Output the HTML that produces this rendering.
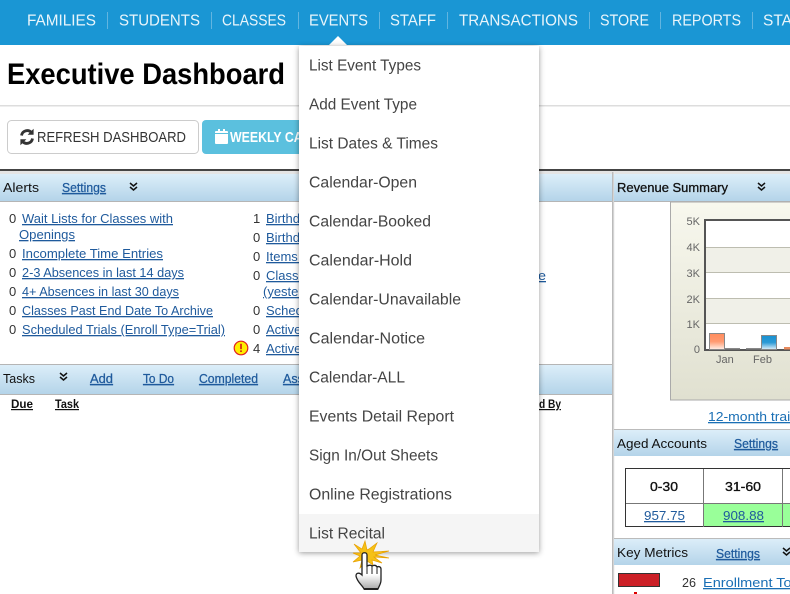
<!DOCTYPE html>
<html><head><meta charset="utf-8"><title>Executive Dashboard</title>
<style>
html,body{margin:0;padding:0;background:#fff;width:790px;height:594px;overflow:hidden}
svg{display:block;font-family:"Liberation Sans",sans-serif}
.n{font-size:16px;fill:#e9f5fb}
.m{font-size:15.5px;fill:#444}
.l{font-size:13px;fill:#1f5a9c;text-decoration:underline}
.c{font-size:13px;fill:#333}
.h{font-size:13px;fill:#111}
.s{font-size:12.5px;fill:#1f5a9c;text-decoration:underline;stroke:#1f5a9c;stroke-width:.25}
.b{font-size:12px;fill:#111;font-weight:bold;text-decoration:underline}
.y{font-size:11px;fill:#666}
</style></head><body>
<svg width="790" height="594" viewBox="0 0 790 594" xmlns="http://www.w3.org/2000/svg">
<defs>
<linearGradient id="hd" x1="0" y1="0" x2="0" y2="1"><stop offset="0" stop-color="#dceef9"/><stop offset="1" stop-color="#b4d4e9"/></linearGradient>
<linearGradient id="ch" x1="0" y1="0" x2="0" y2="1"><stop offset="0" stop-color="#f8f8ee"/><stop offset="1" stop-color="#e0e0d0"/></linearGradient>
<linearGradient id="or" x1="0" y1="0" x2="0" y2="1"><stop offset="0" stop-color="#ff8c5e"/><stop offset=".5" stop-color="#ff9a70"/><stop offset="1" stop-color="#fff0e8"/></linearGradient>
<linearGradient id="bl" x1="0" y1="0" x2="0" y2="1"><stop offset="0" stop-color="#1890d0"/><stop offset=".5" stop-color="#2a9ad6"/><stop offset="1" stop-color="#e0f0fa"/></linearGradient>
<linearGradient id="hand" x1="0" y1="0" x2="0" y2="1"><stop offset="0" stop-color="#fff"/><stop offset=".6" stop-color="#fff"/><stop offset="1" stop-color="#aaa"/></linearGradient>
</defs>

<!-- nav -->
<rect x="0" y="0" width="790" height="45" fill="#1a96d4"/>
<g class="n">
<text class="n" x="27" y="25.500" textLength="69" lengthAdjust="spacingAndGlyphs">FAMILIES</text>
<text class="n" x="119" y="25.500" textLength="81" lengthAdjust="spacingAndGlyphs">STUDENTS</text>
<text class="n" x="222" y="25.500" textLength="64" lengthAdjust="spacingAndGlyphs">CLASSES</text>
<text class="n" x="309" y="25.500" textLength="59" lengthAdjust="spacingAndGlyphs">EVENTS</text>
<text class="n" x="390" y="25.500" textLength="46" lengthAdjust="spacingAndGlyphs">STAFF</text>
<text class="n" x="459" y="25.500" textLength="119" lengthAdjust="spacingAndGlyphs">TRANSACTIONS</text>
<text class="n" x="600" y="25.500" textLength="49" lengthAdjust="spacingAndGlyphs">STORE</text>
<text class="n" x="672" y="25.500" textLength="69" lengthAdjust="spacingAndGlyphs">REPORTS</text>
<text class="n" x="763" y="25.500" textLength="29" lengthAdjust="spacingAndGlyphs">STA</text>
</g>
<g fill="#62b5e0">
<rect x="107" y="12" width="1" height="17"/><rect x="211" y="12" width="1" height="17"/><rect x="298" y="12" width="1" height="17"/><rect x="379" y="12" width="1" height="17"/><rect x="447" y="12" width="1" height="17"/><rect x="589" y="12" width="1" height="17"/><rect x="660" y="12" width="1" height="17"/><rect x="752" y="12" width="1" height="17"/>
</g>

<!-- title -->
<text x="7" y="84" font-size="30" font-weight="bold" fill="#000" textLength="278" lengthAdjust="spacingAndGlyphs">Executive Dashboard</text>
<rect x="0" y="105" width="790" height="1.500" fill="#ddd"/>

<!-- buttons -->
<rect x="7.500" y="120.500" width="191" height="33" rx="4" fill="#fff" stroke="#ccc"/>
<g fill="none" stroke="#333" stroke-width="2.800">
<path d="M21.500 135.500a5.800 5.800 0 0 1 10-3"/>
<path d="M32.500 138.500a5.800 5.800 0 0 1-10 3"/>
</g>
<path d="M33.600 128.800v6h-6zM20.400 145.200v-6h6z" fill="#333"/>
<text x="37" y="142" font-size="14.500" fill="#333" textLength="149" lengthAdjust="spacingAndGlyphs">REFRESH DASHBOARD</text>
<rect x="202" y="120" width="110" height="34" rx="4" fill="#5bc0de"/>
<path d="M215 134h13v9a1 1 0 0 1-1 1h-11a1 1 0 0 1-1-1zM216 131h2v-2h2v2h3v-2h2v2h2a1 1 0 0 1 1 1v1h-13v-1a1 1 0 0 1 1-1z" fill="#fff"/>
<text x="230" y="142" font-size="14.500" font-weight="bold" fill="#fff" textLength="124" lengthAdjust="spacingAndGlyphs">WEEKLY CALENDAR</text>

<!-- section lines -->
<rect x="0" y="169" width="790" height="2" fill="#444"/>
<rect x="0" y="171" width="790" height="3" fill="#e4e4e4"/>

<!-- alerts -->
<rect x="0" y="174" width="612" height="27" fill="url(#hd)"/>
<rect x="0" y="201" width="612" height="1" fill="#b5b5b5"/>
<text class="h" x="3" y="192" textLength="36" lengthAdjust="spacingAndGlyphs">Alerts</text>
<text class="s" x="62" y="192" textLength="44" lengthAdjust="spacingAndGlyphs">Settings</text>
<path d="M130 183l3.500 3 3.500-3M130 187l3.500 3 3.500-3" fill="none" stroke="#111" stroke-width="1.500"/>

<g class="c">
<text class="c" x="9" y="223">0</text><text class="c" x="9" y="258">0</text><text class="c" x="9" y="277">0</text><text class="c" x="9" y="296">0</text><text class="c" x="9" y="315">0</text><text class="c" x="9" y="334">0</text>
<text class="c" x="253" y="223">1</text><text class="c" x="253" y="242">0</text><text class="c" x="253" y="261">0</text><text class="c" x="253" y="280">0</text><text class="c" x="253" y="315">0</text><text class="c" x="253" y="334">0</text><text class="c" x="253" y="353">4</text>
</g>
<text class="l" x="22" y="223" textLength="151" lengthAdjust="spacingAndGlyphs">Wait Lists for Classes with</text>
<text class="l" x="19" y="239" textLength="56" lengthAdjust="spacingAndGlyphs">Openings</text>
<text class="l" x="22" y="258" textLength="141" lengthAdjust="spacingAndGlyphs">Incomplete Time Entries</text>
<text class="l" x="22" y="277" textLength="162" lengthAdjust="spacingAndGlyphs">2-3 Absences in last 14 days</text>
<text class="l" x="22" y="296" textLength="157" lengthAdjust="spacingAndGlyphs">4+ Absences in last 30 days</text>
<text class="l" x="22" y="315" textLength="191" lengthAdjust="spacingAndGlyphs">Classes Past End Date To Archive</text>
<text class="l" x="22" y="334" textLength="203" lengthAdjust="spacingAndGlyphs">Scheduled Trials (Enroll Type=Trial)</text>
<text class="l" x="266" y="223">Birthdays</text>
<text class="l" x="266" y="242">Birthdays</text>
<text class="l" x="266" y="261">Items Low</text>
<text class="l" x="266" y="280">Classes</text>
<text class="l" x="263" y="296">(yesterday)</text>
<text class="l" x="266" y="315">Scheduled</text>
<text class="l" x="266" y="334">Active</text>
<text class="l" x="266" y="353">Active</text>
<text class="l" x="538" y="280" textLength="8" lengthAdjust="spacingAndGlyphs">e</text>
<circle cx="241" cy="348" r="6.800" fill="#ffee00" stroke="#e02020" stroke-width="1.200"/>
<rect x="240.200" y="343.800" width="1.600" height="5.400" fill="#d01818"/><rect x="240.200" y="350.400" width="1.600" height="1.600" fill="#d01818"/>

<!-- tasks -->
<rect x="0" y="364" width="612" height="1" fill="#b5b5b5"/>
<rect x="0" y="365" width="612" height="29" fill="url(#hd)"/>
<rect x="0" y="394" width="612" height="1" fill="#b5b5b5"/>
<text class="h" x="3" y="383" textLength="32" lengthAdjust="spacingAndGlyphs">Tasks</text>
<path d="M60 373l3.500 3 3.500-3M60 377l3.500 3 3.500-3" fill="none" stroke="#111" stroke-width="1.500"/>
<text class="s" x="90" y="383" textLength="23" lengthAdjust="spacingAndGlyphs">Add</text>
<text class="s" x="143" y="383" textLength="31" lengthAdjust="spacingAndGlyphs">To Do</text>
<text class="s" x="199" y="383" textLength="59" lengthAdjust="spacingAndGlyphs">Completed</text>
<text class="s" x="283" y="383">Assign</text>
<text class="b" x="11" y="408" textLength="22" lengthAdjust="spacingAndGlyphs">Due</text>
<text class="b" x="55" y="408" textLength="24" lengthAdjust="spacingAndGlyphs">Task</text>
<text class="b" x="539" y="408" textLength="22" lengthAdjust="spacingAndGlyphs">d By</text>

<!-- divider -->
<rect x="612" y="172" width="1.500" height="422" fill="#bbb"/>
<rect x="613.500" y="172" width="1" height="422" fill="#eee"/>

<!-- revenue -->
<rect x="614" y="174" width="176" height="27" fill="url(#hd)"/>
<rect x="614" y="201" width="176" height="1" fill="#b5b5b5"/>
<text class="h" x="617" y="192" stroke="#111" stroke-width=".3" textLength="111" lengthAdjust="spacingAndGlyphs">Revenue Summary</text>
<path d="M758 183l3.500 3 3.500-3M758 187l3.500 3 3.500-3" fill="none" stroke="#111" stroke-width="1.500"/>
<rect x="670.500" y="202" width="130" height="198" fill="url(#ch)" stroke="#aaa"/>
<rect x="705" y="220" width="90" height="130" fill="#fff"/>
<rect x="705" y="247" width="90" height="25" fill="#f0f0e8"/>
<rect x="705" y="298" width="90" height="25" fill="#f0f0e8"/>
<g fill="#bdbdb0"><rect x="705" y="247" width="90" height="1"/><rect x="705" y="272" width="90" height="1"/><rect x="705" y="298" width="90" height="1"/><rect x="705" y="323" width="90" height="1"/></g>
<rect x="705" y="219" width="85" height="2" fill="#555"/>
<rect x="704" y="219" width="2" height="132" fill="#555"/>
<rect x="704" y="349" width="86" height="2" fill="#555"/>
<g class="y" text-anchor="end">
<text class="y" x="700" y="225">5K</text><text class="y" x="700" y="251">4K</text><text class="y" x="700" y="277">3K</text><text class="y" x="700" y="303">2K</text><text class="y" x="700" y="328">1K</text><text class="y" x="700" y="353">0</text>
</g>
<rect x="709.500" y="333.500" width="15" height="16" fill="url(#or)" stroke="#888"/>
<rect x="761.500" y="335.500" width="15" height="14" fill="url(#bl)" stroke="#888"/>
<rect x="725" y="348" width="15" height="1.500" fill="#888"/>
<rect x="746" y="348" width="15" height="1.500" fill="#888"/>
<rect x="784" y="347" width="6" height="2.500" fill="#e8895c"/>
<text class="y" x="716" y="363">Jan</text>
<text class="y" x="753" y="363">Feb</text>
<text x="708" y="421" font-size="13" fill="#1a6fb5" text-decoration="underline" textLength="104" lengthAdjust="spacingAndGlyphs">12-month trailing</text>
<rect x="614" y="429" width="176" height="1" fill="#bbb"/>

<!-- aged -->
<rect x="614" y="430" width="176" height="26" fill="url(#hd)"/>
<text class="h" x="617" y="448" textLength="90" lengthAdjust="spacingAndGlyphs">Aged Accounts</text>
<text class="s" x="734" y="448" textLength="44" lengthAdjust="spacingAndGlyphs">Settings</text>
<rect x="704" y="504" width="78" height="22" fill="#99ff99"/>
<rect x="783" y="504" width="7" height="22" fill="#99ff99"/>
<rect x="625.500" y="468.500" width="170" height="58" fill="none" stroke="#333"/>
<rect x="703" y="469" width="1" height="58" fill="#777"/><rect x="782" y="469" width="1" height="58" fill="#777"/>
<rect x="626" y="503" width="164" height="1" fill="#777"/>
<text x="664" y="491" font-size="13" fill="#111" stroke="#111" stroke-width=".35" text-anchor="middle" textLength="28" lengthAdjust="spacingAndGlyphs">0-30</text>
<text x="743" y="491" font-size="13" fill="#111" stroke="#111" stroke-width=".35" text-anchor="middle" textLength="36" lengthAdjust="spacingAndGlyphs">31-60</text>
<text class="l" x="644" y="520" textLength="41" lengthAdjust="spacingAndGlyphs">957.75</text>
<text class="l" x="723" y="520" textLength="41" lengthAdjust="spacingAndGlyphs">908.88</text>
<rect x="614" y="538" width="176" height="1" fill="#bbb"/>

<!-- key metrics -->
<rect x="614" y="539" width="176" height="26" fill="url(#hd)"/>
<text class="h" x="617" y="557" textLength="71" lengthAdjust="spacingAndGlyphs">Key Metrics</text>
<text class="s" x="716" y="558" textLength="44" lengthAdjust="spacingAndGlyphs">Settings</text>
<path d="M783 548l3.500 3 3.500-3M783 552l3.500 3 3.500-3" fill="none" stroke="#111" stroke-width="1.500"/>
<rect x="618.500" y="573.500" width="41" height="13" fill="#cc2027" stroke="#333"/>
<rect x="634" y="592" width="3" height="2" fill="#d00"/>
<text class="c" x="682" y="587" textLength="14" lengthAdjust="spacingAndGlyphs">26</text>
<text x="703" y="587" font-size="13" fill="#1a6fb5" text-decoration="underline" textLength="104" lengthAdjust="spacingAndGlyphs">Enrollment Total</text>

<!-- dropdown -->
<path d="M329 45l9-9 9 9z" fill="#fff"/>
<rect x="299" y="46" width="240" height="506" fill="#fff" style="filter:drop-shadow(0 1px 3px rgba(0,0,0,.4))"/>
<rect x="299" y="514" width="240" height="38" fill="#f5f5f5"/>
<text class="m" x="309" y="70.500" textLength="112" lengthAdjust="spacingAndGlyphs">List Event Types</text>
<text class="m" x="309" y="109.500" textLength="108" lengthAdjust="spacingAndGlyphs">Add Event Type</text>
<text class="m" x="309" y="148.500" textLength="129" lengthAdjust="spacingAndGlyphs">List Dates &amp; Times</text>
<text class="m" x="309" y="187.500" textLength="108" lengthAdjust="spacingAndGlyphs">Calendar-Open</text>
<text class="m" x="309" y="226.500" textLength="122" lengthAdjust="spacingAndGlyphs">Calendar-Booked</text>
<text class="m" x="309" y="265.500" textLength="103" lengthAdjust="spacingAndGlyphs">Calendar-Hold</text>
<text class="m" x="309" y="304.500" textLength="152" lengthAdjust="spacingAndGlyphs">Calendar-Unavailable</text>
<text class="m" x="309" y="343.500" textLength="116" lengthAdjust="spacingAndGlyphs">Calendar-Notice</text>
<text class="m" x="309" y="382.500" textLength="96" lengthAdjust="spacingAndGlyphs">Calendar-ALL</text>
<text class="m" x="309" y="421.500" textLength="145" lengthAdjust="spacingAndGlyphs">Events Detail Report</text>
<text class="m" x="309" y="460.500" textLength="129" lengthAdjust="spacingAndGlyphs">Sign In/Out Sheets</text>
<text class="m" x="309" y="499.500" textLength="143" lengthAdjust="spacingAndGlyphs">Online Registrations</text>
<text class="m" x="309" y="538.500" textLength="76" lengthAdjust="spacingAndGlyphs">List Recital</text>

<!-- cursor -->
<path d="M365 541l2 9 2-1 8-6-4 9 16-1-14 4 14 3-15-1 8 6-10-3 1 5-6-4-7 7 2-8-9 2 7-6-7-3 8 0-7-9 8 5z" fill="#f5c116" stroke="#e8a000" stroke-width=".7"/>
<path d="M362 555c0-3 5-3 5 0v11c2-1 4-1 5 0 2-1 4-1 5 1 2-1 4 0 4 2v11c0 4-2 6-3 9h-14c-1-3-7-7-8-13 0-3 3-4 6-1z" fill="url(#hand)" stroke="#222" stroke-width="1.300"/>
<path d="M367 566v8M372 566v8M377 567v7" stroke="#222" stroke-width="1" fill="none"/>
<rect x="364" y="588" width="14" height="2" fill="#222"/>
</svg>
</body></html>
